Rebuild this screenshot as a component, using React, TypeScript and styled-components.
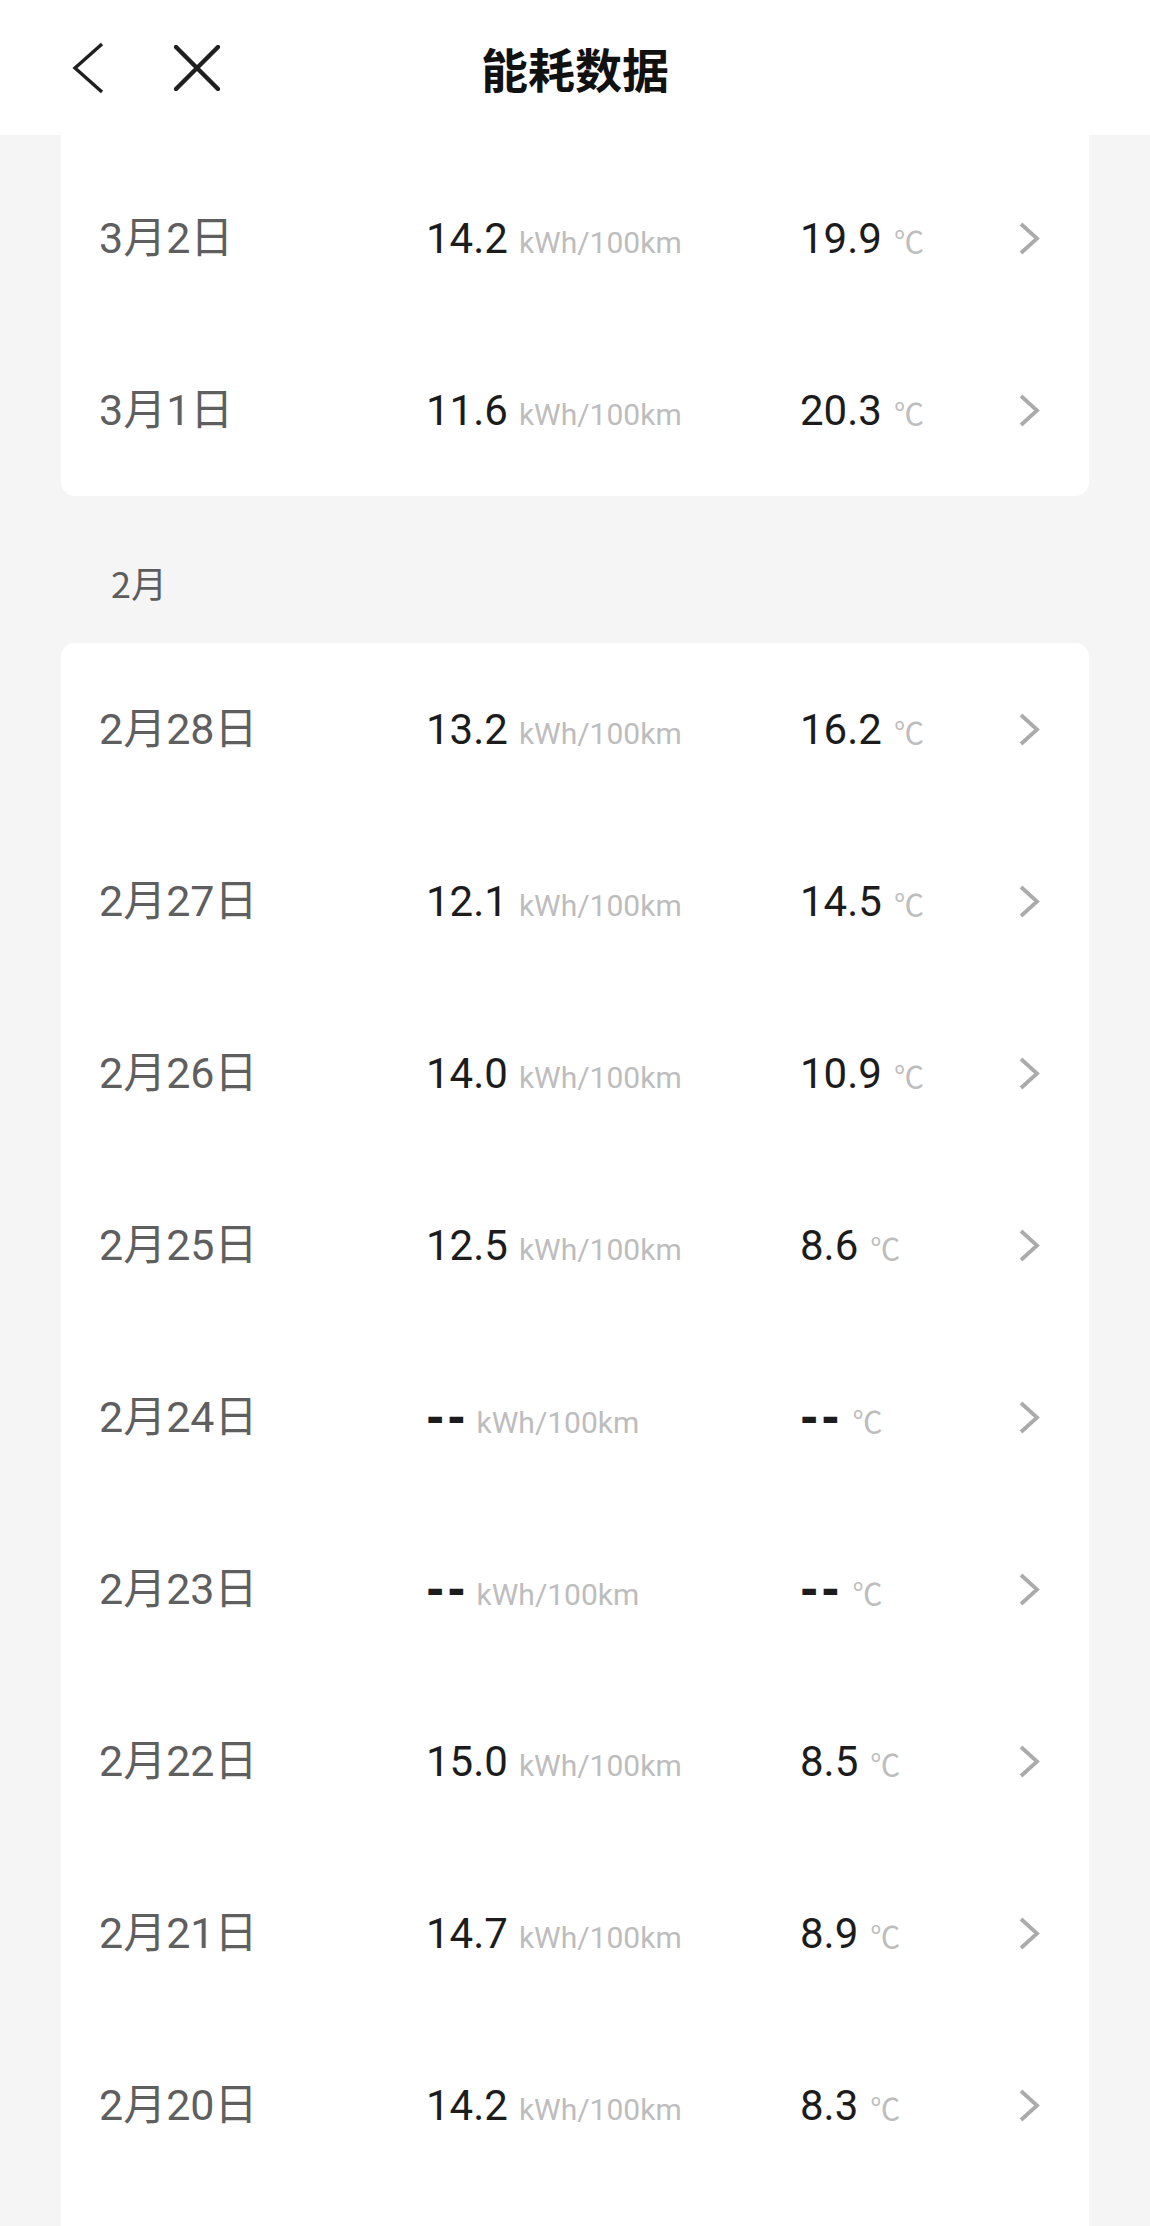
import styled, { createGlobalStyle } from "styled-components";

const GlobalStyle = createGlobalStyle`
  html, body {
    margin: 0;
    padding: 0;
    background: #f5f5f5;
  }
  body {
    height: 2226px;
    overflow: hidden;
    font-family: Roboto, "Noto Sans CJK SC", sans-serif;
  }
`;

interface DayRecord {
  date: string;
  energy: string | null;
  temp: string | null;
}

interface MonthGroup {
  label: string | null;
  days: DayRecord[];
}

const groups: MonthGroup[] = [
  {
    label: null,
    days: [
      { date: "3月2日", energy: "14.2", temp: "19.9" },
      { date: "3月1日", energy: "11.6", temp: "20.3" },
    ],
  },
  {
    label: "2月",
    days: [
      { date: "2月28日", energy: "13.2", temp: "16.2" },
      { date: "2月27日", energy: "12.1", temp: "14.5" },
      { date: "2月26日", energy: "14.0", temp: "10.9" },
      { date: "2月25日", energy: "12.5", temp: "8.6" },
      { date: "2月24日", energy: null, temp: null },
      { date: "2月23日", energy: null, temp: null },
      { date: "2月22日", energy: "15.0", temp: "8.5" },
      { date: "2月21日", energy: "14.7", temp: "8.9" },
      { date: "2月20日", energy: "14.2", temp: "8.3" },
    ],
  },
];

const Page = styled.div`
  min-height: 2226px;
  display: flex;
  flex-direction: column;
`;

const Header = styled.header`
  height: 135px;
  background: #ffffff;
  display: grid;
  grid-template-columns: 1fr auto 1fr;
  align-items: center;
`;

const NavButtons = styled.div`
  display: flex;
  align-items: center;
  gap: 70px;
  padding-left: 72px;
`;

const IconButton = styled.button`
  border: 0;
  background: none;
  padding: 0;
  display: flex;
  cursor: pointer;
`;

const Title = styled.h1`
  margin: 0;
  font-family: "Noto Sans CJK SC", sans-serif;
  font-size: 47px;
  font-weight: 700;
  color: #111111;
`;

const Content = styled.main`
  padding: 0 61px;
`;

const Card = styled.section<{ $clipped?: boolean }>`
  background: #ffffff;
  border-radius: ${(p) => (p.$clipped ? "0 0 14px 14px" : "14px 14px 0 0")};
  padding: ${(p) => (p.$clipped ? "17px 0 0" : "0 0 80px")};
`;

const MonthLabel = styled.div`
  padding: 66px 0 41px 50px;
  font-family: "Noto Sans CJK SC", sans-serif;
  font-size: 36px;
  line-height: 40px;
  color: #5c5c5c;
`;

const Row = styled.div`
  height: 172px;
  display: grid;
  grid-template-columns: 327px 374px 1fr 21px;
  align-items: center;
  padding: 0 50px 0 38px;
`;

const DateText = styled.span`
  font-size: 43px;
  line-height: 1;
  color: #5f5f5f;
  white-space: nowrap;
`;

const Value = styled.span`
  display: flex;
  align-items: baseline;
  white-space: nowrap;
`;

const Number = styled.span`
  font-size: 42px;
  color: #1c1c1c;
`;

const Dash = styled.span`
  font-family: "DejaVu Sans", sans-serif;
  font-size: 44px;
  font-weight: 700;
  letter-spacing: 3px;
  color: #1c1c1c;
`;

const Unit = styled.span<{ $gap: number }>`
  margin-left: ${(p) => p.$gap}px;
  font-size: 30px;
  color: #bdbdbd;
`;

function BackIcon() {
  return (
    <svg width="32" height="52" viewBox="0 0 32 52" fill="none">
      <path d="M30 2 L3 26 L30 50" stroke="#1f1f1f" strokeWidth="3.4" />
    </svg>
  );
}

function CloseIcon() {
  return (
    <svg width="46" height="46" viewBox="0 0 46 46" fill="none">
      <path
        d="M2 2 L44 44 M44 2 L2 44"
        stroke="#1f1f1f"
        strokeWidth="4.4"
        strokeLinecap="round"
      />
    </svg>
  );
}

function Chevron() {
  return (
    <svg width="22" height="35" viewBox="0 0 22 35" fill="none">
      <path d="M3 3 L19 17.5 L3 32" stroke="#ababab" strokeWidth="3.8" />
    </svg>
  );
}

function DayRow({ day }: { day: DayRecord }) {
  return (
    <Row>
      <DateText>{day.date}</DateText>
      <Value>
        {day.energy ? <Number>{day.energy}</Number> : <Dash>--</Dash>}
        <Unit $gap={day.energy ? 11 : 8}>kWh/100km</Unit>
      </Value>
      <Value>
        {day.temp ? <Number>{day.temp}</Number> : <Dash>--</Dash>}
        <Unit $gap={day.temp ? 12 : 10}>℃</Unit>
      </Value>
      <Chevron />
    </Row>
  );
}

export default function App() {
  return (
    <>
      <GlobalStyle />
      <Page>
        <Header>
          <NavButtons>
            <IconButton aria-label="返回">
              <BackIcon />
            </IconButton>
            <IconButton aria-label="关闭">
              <CloseIcon />
            </IconButton>
          </NavButtons>
          <Title>能耗数据</Title>
          <div />
        </Header>
        <Content>
          {groups.map((group, i) => (
            <div key={group.label ?? `g${i}`}>
              {group.label && <MonthLabel>{group.label}</MonthLabel>}
              <Card $clipped={group.label === null}>
                {group.days.map((day) => (
                  <DayRow key={day.date} day={day} />
                ))}
              </Card>
            </div>
          ))}
        </Content>
      </Page>
    </>
  );
}
